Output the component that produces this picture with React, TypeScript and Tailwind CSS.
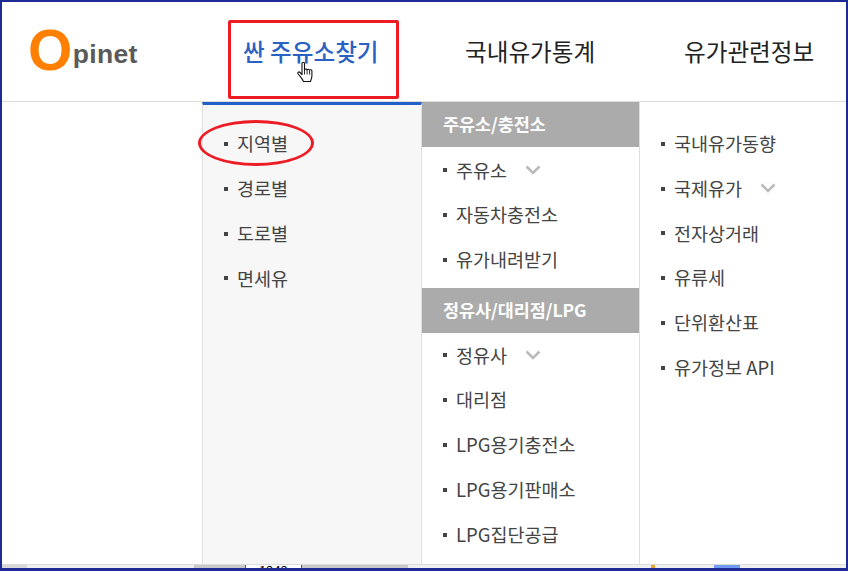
import React from "react";

const Chevron = () => (
  <svg width="16" height="10" viewBox="0 0 16 10" className="ml-[18px] mt-[-1px]">
    <path d="M1.500 1.500 L8 8 L14.500 1.500" fill="none" stroke="#bbbbbb" strokeWidth="2.600" />
  </svg>
);

const Item = ({ label, arrow }: { label: string; arrow?: boolean }) => (
  <li className="h-[44.8px] flex items-center pl-[21px] text-[18.5px] text-[#444]">
    <span className="w-[4px] h-[4px] bg-[#444] mr-[9px] shrink-0" />
    <span>{label}</span>
    {arrow && <Chevron />}
  </li>
);

const Hand = () => (
  <svg width="18" height="22" viewBox="0 0 18 22" className="absolute left-[295px] top-[59px]">
    <path
      d="M5 2.500c0-1.600 2.500-1.600 2.500 0V9c.2-1.300 2.400-1.300 2.600 0 .2-1 2.300-1 2.500.2.3-.8 2.200-.7 2.300.6V15c0 2-.8 3.500-1.500 5.500H6.500C5.500 18 3.500 16 1.200 13 .2 11.500 1.700 10.200 3 11.500L5 13.500z"
      fill="#fff"
      stroke="#111"
      strokeWidth="1.100"
      strokeLinejoin="round"
    />
    <path d="M7.500 9v4.500M10.100 9v4.500M12.600 9.500v4" stroke="#111" strokeWidth="0.900" fill="none" />
  </svg>
);

const Section = ({ label, className }: { label: string; className?: string }) => (
  <div className={`h-[45px] bg-[#ababab] text-white font-bold text-[17.4px] flex items-center pl-[21px] ${className ?? ""}`}>
    {label}
  </div>
);

export default function App() {
  return (
    <div
      className="relative w-[848px] h-[571px] overflow-hidden bg-white border-x-2 border-t-2 border-b-[3px] border-[#1f2a96] flex flex-col"
      style={{ fontFamily: '"Noto Sans CJK KR", "Liberation Sans", sans-serif' }}
    >
      {/* header */}
      <div className="h-[100px] shrink-0 border-b border-[#dcdcdc] flex items-center">
        <div className="w-[241px] pl-[26px] mb-[4px] flex items-end" style={{ fontFamily: '"Liberation Sans", sans-serif' }}>
          <span className="text-[#ff7f00] text-[57px] font-bold leading-[44px]">O</span>
          <span className="text-[#5a5a5a] text-[26.500px] font-bold leading-[26px] tracking-[0.3px] ml-[0.500px] mb-[5px]">pinet</span>
        </div>
        <div className="w-[136px] whitespace-nowrap text-[23.600px] font-medium text-[#2a62c4]">싼 주유소찾기</div>
        <div className="ml-[86px] w-[130px] whitespace-nowrap text-[23.600px] text-[#222]">국내유가통계</div>
        <div className="ml-[89px] whitespace-nowrap text-[23.600px] text-[#222]">유가관련정보</div>
      </div>

      {/* dropdown */}
      <div className="flex-1 flex pl-[200px] min-h-0">
        <div className="w-[220px] bg-[#f7f7f7] border-x border-[#dedede] border-t-[3px] border-t-[#2060c8] pt-[16.600px]">
          <ul>
            <Item label="지역별" />
            <Item label="경로별" />
            <Item label="도로별" />
            <Item label="면세유" />
          </ul>
        </div>
        <div className="w-[218px] bg-white border-r border-[#dedede]">
          <Section label="주유소/충전소" />
          <ul className="pt-[1px]">
            <Item label="주유소" arrow />
            <Item label="자동차충전소" />
            <Item label="유가내려받기" />
          </ul>
          <Section label="정유사/대리점/LPG" className="mt-[5.600px]" />
          <ul>
            <Item label="정유사" arrow />
            <Item label="대리점" />
            <Item label="LPG용기충전소" />
            <Item label="LPG용기판매소" />
            <Item label="LPG집단공급" />
          </ul>
        </div>
        <div className="flex-1 pt-[19.500px]">
          <ul>
            <Item label="국내유가동향" />
            <Item label="국제유가" arrow />
            <Item label="전자상거래" />
            <Item label="유류세" />
            <Item label="단위환산표" />
            <Item label="유가정보 API" />
          </ul>
        </div>
      </div>

      {/* cut-off page behind the menu */}
      <div className="h-[4px] shrink-0 flex bg-[#f0f0f0] border-t border-[#dcdcdc] overflow-hidden">
        <div className="w-[25px] bg-[#d8d8d8]" />
        <div className="w-[167px]" />
        <div className="w-[51px] bg-[#c8c8c8]" />
        <div className="w-[1px] bg-[#2060c8]" />
        <div className="w-[55px] bg-white text-[13px] leading-[13px] text-black pl-[13px] mt-[-1px]">1242</div>
        <div className="w-[1px] bg-[#2060c8]" />
        <div className="w-[106px] bg-[#c8c8c8]" />
        <div className="w-[243px]" />
        <div className="w-[4px] bg-[#e8a030]" />
        <div className="w-[59px]" />
        <div className="w-[26px] bg-[#6f9cf0]" />
      </div>

      {/* red annotations */}
      <div className="absolute left-[226px] top-[18px] w-[171px] h-[79px] border-[3px] border-[#ed1c24] rounded-[2px]" />
      <div className="absolute left-[196px] top-[118px] w-[116px] h-[46px] border-[3px] border-[#ed1c24] rounded-[50%]" />
      <Hand />
    </div>
  );
}
